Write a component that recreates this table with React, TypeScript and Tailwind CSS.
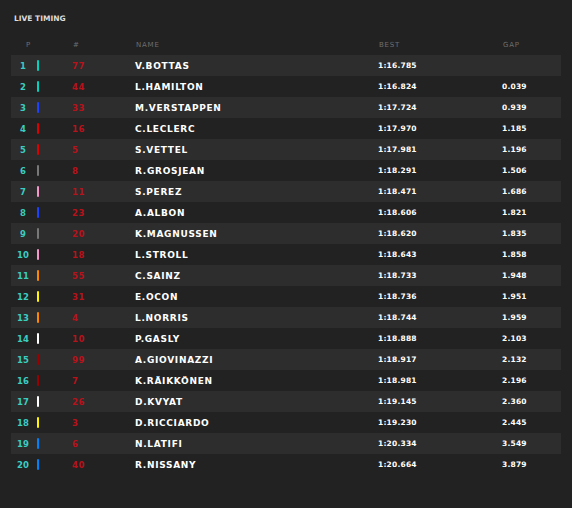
import React from "react";

type Row = { pos: number; num: number; name: string; best: string; gap: string; team: string };

const ROWS: Row[] = [
  { pos: 1, num: 77, name: "V.BOTTAS", best: "1:16.785", gap: "", team: "#00d2be" },
  { pos: 2, num: 44, name: "L.HAMILTON", best: "1:16.824", gap: "0.039", team: "#00d2be" },
  { pos: 3, num: 33, name: "M.VERSTAPPEN", best: "1:17.724", gap: "0.939", team: "#1e41ff" },
  { pos: 4, num: 16, name: "C.LECLERC", best: "1:17.970", gap: "1.185", team: "#dc0000" },
  { pos: 5, num: 5, name: "S.VETTEL", best: "1:17.981", gap: "1.196", team: "#dc0000" },
  { pos: 6, num: 8, name: "R.GROSJEAN", best: "1:18.291", gap: "1.506", team: "#787878" },
  { pos: 7, num: 11, name: "S.PEREZ", best: "1:18.471", gap: "1.686", team: "#f596c8" },
  { pos: 8, num: 23, name: "A.ALBON", best: "1:18.606", gap: "1.821", team: "#1e41ff" },
  { pos: 9, num: 20, name: "K.MAGNUSSEN", best: "1:18.620", gap: "1.835", team: "#787878" },
  { pos: 10, num: 18, name: "L.STROLL", best: "1:18.643", gap: "1.858", team: "#f596c8" },
  { pos: 11, num: 55, name: "C.SAINZ", best: "1:18.733", gap: "1.948", team: "#ff8700" },
  { pos: 12, num: 31, name: "E.OCON", best: "1:18.736", gap: "1.951", team: "#fff500" },
  { pos: 13, num: 4, name: "L.NORRIS", best: "1:18.744", gap: "1.959", team: "#ff8700" },
  { pos: 14, num: 10, name: "P.GASLY", best: "1:18.888", gap: "2.103", team: "#ffffff" },
  { pos: 15, num: 99, name: "A.GIOVINAZZI", best: "1:18.917", gap: "2.132", team: "#9b0000" },
  { pos: 16, num: 7, name: "K.RÄIKKÖNEN", best: "1:18.981", gap: "2.196", team: "#9b0000" },
  { pos: 17, num: 26, name: "D.KVYAT", best: "1:19.145", gap: "2.360", team: "#ffffff" },
  { pos: 18, num: 3, name: "D.RICCIARDO", best: "1:19.230", gap: "2.445", team: "#fff500" },
  { pos: 19, num: 6, name: "N.LATIFI", best: "1:20.334", gap: "3.549", team: "#0082fa" },
  { pos: 20, num: 40, name: "R.NISSANY", best: "1:20.664", gap: "3.879", team: "#0082fa" },
];

export default function App() {
  return (
    <div
      className="w-[572px] h-[508px] bg-[#222222] overflow-hidden"
      style={{ fontFamily: '"DejaVu Sans", "Liberation Sans", sans-serif' }}
    >
      <div className="pt-[14px] pl-[14px] text-[7.5px] font-bold text-[#dddddd] leading-[10px]">
        LIVE TIMING
      </div>

      <div className="mt-[16px] mx-[11px] flex items-center h-[10px] text-[7px] text-[#6e6e6e] tracking-[0.8px] leading-[10px]">
        <div className="w-[24px] pl-[15px]">P</div>
        <div className="w-[38px]" />
        <div className="w-[63px]">#</div>
        <div className="w-[243px]">NAME</div>
        <div className="w-[124px]">BEST</div>
        <div>GAP</div>
      </div>

      <div className="mt-[5px] mx-[11px] flex flex-col">
        {ROWS.map((r) => (
          <div
            key={r.pos}
            className={`flex items-center h-[21px] font-bold ${r.pos % 2 === 1 ? "bg-[#2d2d2d]" : ""}`}
          >
            <div className="w-[24px] text-center text-[8.5px] text-[#3acdc2] leading-[10px]">{r.pos}</div>
            <div className="w-[2px] h-[11px] ml-[2px] rounded-[1px]" style={{ backgroundColor: r.team }} />
            <div className="w-[33px]" />
            <div className="w-[63px] text-[8.5px] text-[#b8121b] leading-[10px] tracking-[0.5px]">{r.num}</div>
            <div className="w-[243px] text-[9px] text-white leading-[10px] tracking-[0.7px]">{r.name}</div>
            <div className="w-[124px] text-[7.5px] text-white leading-[10px] tracking-[0.2px]">{r.best}</div>
            <div className="text-[7.5px] text-white leading-[10px] tracking-[0.2px]">{r.gap}</div>
          </div>
        ))}
      </div>
    </div>
  );
}
